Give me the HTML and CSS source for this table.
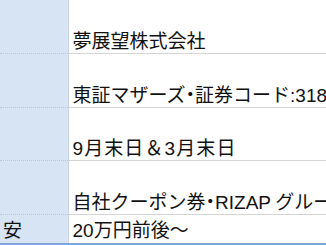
FILE: index.html
```html
<!DOCTYPE html>
<html lang="ja">
<head>
<meta charset="utf-8">
<title>株主優待 銘柄情報</title>
<link rel="stylesheet" href="styles.css">
</head>
<body>
<div class="sheet">
  <table class="info">
    <tr class="row-tall">
      <th class="label"></th>
      <td class="value">夢展望株式会社</td>
    </tr>
    <tr class="row-tall">
      <th class="label"></th>
      <td class="value">東証マザーズ<span class="dot">・</span>証券コード<span class="latin">:3185</span></td>
    </tr>
    <tr class="row-tall row-short-fix">
      <th class="label"></th>
      <td class="value spaced"><span class="latin">9</span>月末日＆<span class="latin">3</span>月末日</td>
    </tr>
    <tr class="row-tall">
      <th class="label"></th>
      <td class="value">自社クーポン券<span class="dot">・</span><span class="latin">RIZAP</span> グループ商品</td>
    </tr>
    <tr class="row-single">
      <th class="label">安</th>
      <td class="value"><span class="latin">20</span>万円前後～</td>
    </tr>
  </table>
</div>
</body>
</html>
```
FILE: styles.css
```css
html, body {
  margin: 0;
  padding: 0;
  background: #ffffff;
}

.sheet {
  width: 326px;
  height: 245px;
  overflow: hidden;
  border-bottom: 2px solid #7fa6d6;
  box-sizing: border-box;
}

.info {
  border-collapse: collapse;
  font-family: "Noto Sans CJK JP", "Liberation Sans", sans-serif;
  font-size: 19px;
  line-height: 26px;
  color: #111111;
  white-space: nowrap;
}

.info th,
.info td {
  padding-top: 0;
  padding-bottom: 0;
}

/* two-line rows: the entry sits on the lower line */
.row-tall th,
.row-tall td {
  height: 53px;
  vertical-align: bottom;
}

.row-short-fix th,
.row-short-fix td {
  height: 52px;
}

.row-single th,
.row-single td {
  height: 28px;
  vertical-align: middle;
}

.info tr + tr th,
.info tr + tr td {
  border-top: 1px solid #d4d4d4;
}

.info tr + tr th.label {
  border-top: 1px dotted #b7c6d8;
}

.label {
  width: 68px;
  min-width: 68px;
  max-width: 68px;
  padding-left: 3px;
  padding-right: 0;
  box-sizing: border-box;
  background: #d6e4f4;
  border-right: 1px solid #c9d4e2;
  text-align: left;
  font-weight: normal;
}

.value {
  padding-left: 4px;
  padding-right: 0;
  text-align: left;
}

.spaced {
  letter-spacing: 1.1px;
}

.latin {
  font-family: "Liberation Sans", sans-serif;
  line-height: 1;
}

/* half-width middle dot between phrases */
.dot {
  font-feature-settings: "halt";
}
```
